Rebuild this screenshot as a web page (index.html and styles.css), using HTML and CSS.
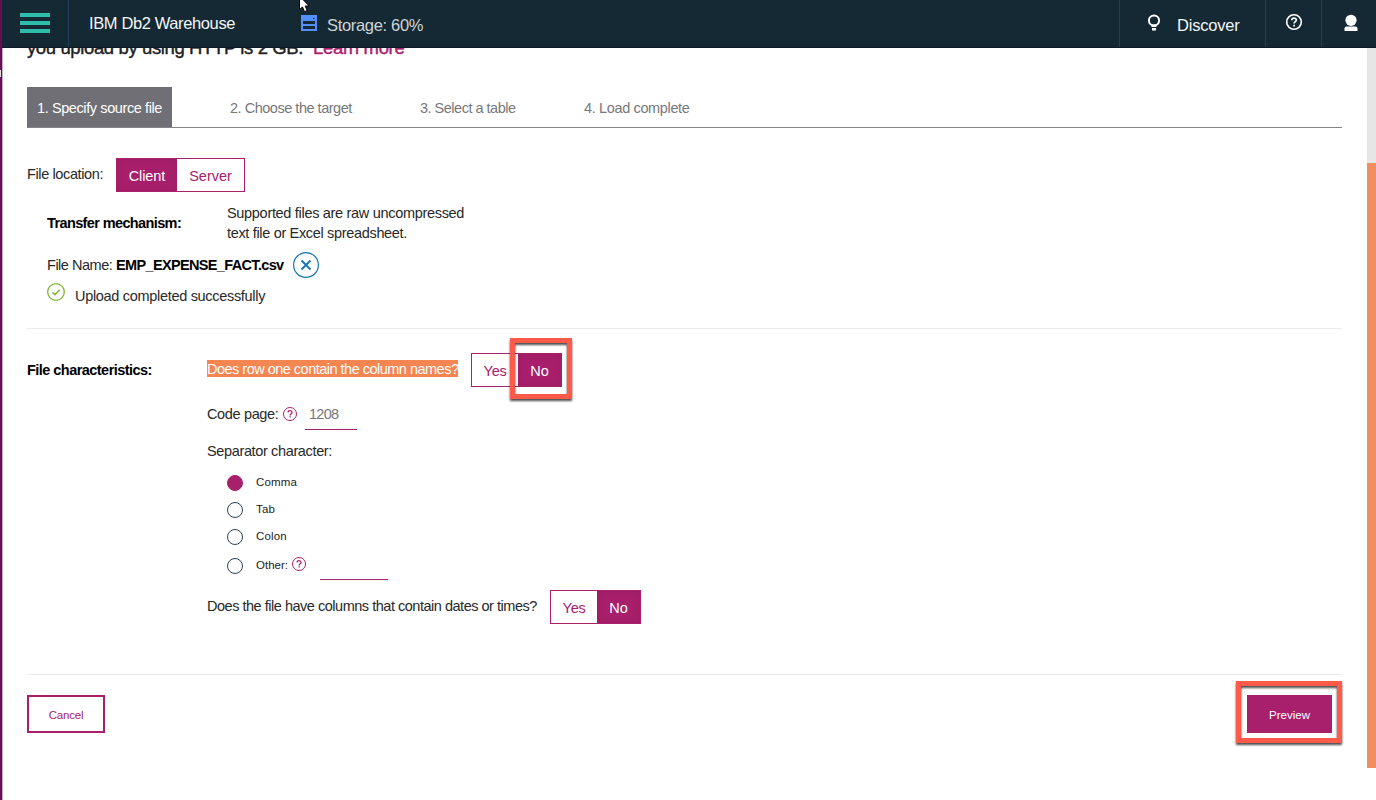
FILE: index.html
```html
<!DOCTYPE html>
<html lang="en">
<head>
<meta charset="utf-8">
<title>IBM Db2 Warehouse</title>
<link rel="stylesheet" href="styles.css">
</head>
<body>
<div class="window">
  <div class="edge"><span class="edge-mark"></span></div>
  <div class="app">
    <header class="topbar">
      <div class="menu"><i></i><i></i><i></i></div>
      <div class="brand"><span>IBM Db2 Warehouse</span></div>
      <div class="storage">
        <svg width="16" height="16" viewBox="0 0 16 16"><path fill="#528ffa" d="M0 0h16v16H0z"/><path fill="#152934" d="M2 6h12v3H2zM2 11h12v3H2zM12 3h1.500v1H12z"/></svg>
        <span>Storage: 60%</span>
      </div>
      <div class="discover">
        <svg width="14" height="18" viewBox="0 0 14 18"><circle cx="7" cy="6.500" r="5.100" fill="none" stroke="#fff" stroke-width="2"/><path fill="#fff" d="M4.500 10.500h5V13h-5zM5 14h4v2.500H5z"/></svg>
        <span>Discover</span>
      </div>
      <div class="help"><svg width="18" height="18" viewBox="0 0 18 18" fill="none" stroke="#fff"><circle cx="9" cy="9" r="7.300" stroke-width="1.600"/><path stroke-width="1.700" d="M6.800 7.200C6.800 4.400 11.300 4.400 11.300 7.100C11.300 8.700 9.100 8.700 9.100 10.500M9.100 11.700v1.700"/></svg></div>
      <div class="user"><svg width="14" height="18" viewBox="0 0 14 18" fill="#fff"><circle cx="7" cy="6.300" r="5.600"/><path d="M.5 17v-2.500q0-1.900 2-1.900h9q2 0 2 1.900V17z"/></svg></div>
    </header>
    <div class="body">
      <main class="content">
        <div class="notice"><p><span>you upload by using HTTP is 2 GB.</span><a>Learn more</a></p></div>
        <nav class="tabs">
          <div class="tab active"><span class="t1">1. Specify source file</span></div>
          <div class="tab tab2"><span class="t2">2. Choose the target</span></div>
          <div class="tab tab3"><span class="t3">3. Select a table</span></div>
          <div class="tab"><span class="t4">4. Load complete</span></div>
        </nav>
        <div class="location">
          <span class="loc-label">File location:</span>
          <div class="toggle"><b class="on client">Client</b><b class="server">Server</b></div>
        </div>
        <section class="upload">
          <div class="transfer"><strong>Transfer mechanism:</strong><p><span class="d1">Supported files are raw uncompressed</span><br><span class="d2">text file or Excel spreadsheet.</span></p></div>
          <div class="filename"><span class="fn">File Name:</span><strong>EMP_EXPENSE_FACT.csv</strong>
            <svg width="26" height="26" viewBox="0 0 26 26" fill="none" stroke="#1678b3"><circle cx="13" cy="13" r="12.400" stroke-width="1.200"/><path stroke-width="1.900" d="M8.500 8.500l9 9M17.500 8.500l-9 9"/></svg></div>
          <div class="status"><svg width="18" height="18" viewBox="0 0 18 18" fill="none" stroke="#83b533" stroke-width="1.300"><circle cx="9" cy="9" r="8.300"/><path stroke-width="1.500" d="M5.300 9.200l2.700 2.400 4.700-4.800"/></svg><span>Upload completed successfully</span></div>
        </section>
        <section class="features">
          <strong class="section-title">File characteristics:</strong>
          <div class="fields">
            <div class="row-question"><mark>Does row one contain the column names?</mark>
              <div class="toggle"><b class="yes">Yes</b><b class="on no">No<span class="callout callout-no"></span></b></div></div>
            <div class="codepage"><span class="cp">Code page:</span>
              <svg class="tip" width="14" height="14" viewBox="0 0 14 14" fill="none" stroke="#aa206c"><circle cx="7" cy="7" r="6.500"/><path stroke-width="1.300" d="M5.100 5.500c0-2.400 3.900-2.400 3.900 0C9 6.900 7.100 6.800 7.100 8.400M7.100 9.200v1.400"/></svg>
              <div class="code-input">1208</div></div>
            <div class="separator">Separator character:</div>
            <div class="radios">
              <div class="radio"><i class="checked"></i><span>Comma</span></div>
              <div class="radio"><i></i><span>Tab</span></div>
              <div class="radio"><i></i><span>Colon</span></div>
              <div class="radio other"><i></i><span>Other:</span>
                <svg class="tip" width="14" height="14" viewBox="0 0 14 14" fill="none" stroke="#aa206c"><circle cx="7" cy="7" r="6.500"/><path stroke-width="1.300" d="M5.100 5.500c0-2.400 3.900-2.400 3.900 0C9 6.900 7.100 6.800 7.100 8.400M7.100 9.200v1.400"/></svg>
                <div class="other-input"></div></div>
            </div>
            <div class="dates"><span>Does the file have columns that contain dates or times?</span>
              <div class="toggle"><b class="yes">Yes</b><b class="on no">No</b></div></div>
          </div>
        </section>
        <footer class="actions">
          <div class="button cancel"><span>Cancel</span></div>
          <div class="button preview"><span>Preview</span><i class="callout callout-preview"></i></div>
        </footer>
      </main>
      <div class="scrollbar"><div class="thumb"></div></div>
    </div>
  </div>
  <svg class="cursor" width="13" height="14" viewBox="0 0 13 14"><path fill="#fff" stroke="#000" d="M.5-4V9.500L3.500 7l2 4.700 2.700-1.200-2-4.500h4z"/></svg>
</div>
</body>
</html>
```
FILE: styles.css
```css
* { box-sizing: border-box; }
body { margin: 0; background: #fff; color: #282828; font: 14.500px/20px "Liberation Sans", Arial, sans-serif; }
p { margin: 0; }
svg { display: block; flex: none; }
span, b, strong, mark, a { white-space: nowrap; }
.window { position: relative; display: flex; width: 1376px; height: 800px; overflow: hidden; }
.edge { width: 3px; background: linear-gradient(90deg, #650f59 0 2px, #c9adc5 2px); padding-top: 70px; }
.edge-mark { display: block; width: 1px; height: 7px; background: #ddd; }
.app { flex: 1; min-width: 0; }

.topbar { display: flex; height: 48px; margin-left: -1px; background: #152934; color: #f4f6f7; font-size: 16.500px; border-bottom: 1px solid #0c1b24; }
.topbar > div { display: flex; }
.menu { width: 67px; border-right: 1px solid #234156; flex-direction: column; gap: 4px; padding: 13px 0 0 18px; }
.menu i { width: 30px; height: 4px; background: #2fbdab; }
.brand { width: 231px; padding: 13px 0 0 20px; letter-spacing: -.38px; }
.storage { flex: 1; padding: 15px 0 0 1px; gap: 10px; }
.storage span { color: #cfd4d7; letter-spacing: -.32px; }
.discover { width: 146px; padding: 14px 0 0 27px; border-left: 1px solid #234156; gap: 16px; }
.discover span { padding-top: 1px; letter-spacing: -.2px; }
.help { width: 56px; border-left: 1px solid #234156; padding: 13px 0 0 19px; }
.user { width: 55px; border-left: 1px solid #234156; padding: 14px 0 0 22px; }

.body { display: flex; height: 752px; }
.content { flex: 1; padding: 0 25px 0 24px; }
.notice { height: 39px; overflow: hidden; color: #222; font-size: 18.500px; }
.notice p { display: flex; margin-top: -10px; gap: 10px; -webkit-text-stroke: .4px; }
.notice span { letter-spacing: -.38px; }
.notice a { color: #aa206c; letter-spacing: -.33px; }
.tabs { display: flex; height: 41px; border-bottom: 1px solid #85848a; color: #77787b; }
.tab { padding-top: 11px; }
.active { width: 145px; padding-left: 10px; margin-right: 58px; background: #706f76; color: #fff; }
.tab2 { width: 190px; }
.tab3 { width: 164px; }
.t1 { letter-spacing: -.4px; }
.t2 { letter-spacing: -.48px; }
.t3 { letter-spacing: -.5px; }
.t4 { letter-spacing: -.36px; }
.location { display: flex; height: 34px; margin-top: 30px; }
.loc-label { width: 89px; padding-top: 6px; letter-spacing: -.38px; }
.toggle { display: flex; height: 34px; border: 1px solid #aa206c; }
.toggle b { position: relative; display: flex; align-items: center; justify-content: center; padding-top: 2px; color: #aa206c; font-weight: 400; }
.toggle .on { background: #a81f6c; color: #fff; box-shadow: inset 0 0 8px #9b1c62; }
.client { width: 60px; letter-spacing: -.1px; }
.server { width: 67px; }
.yes { width: 46px; letter-spacing: -.3px; }
.no { width: 43px; }

.upload { height: 137px; padding: 11px 0 0 20px; border-bottom: 1px solid #ececec; }
strong { color: #000; }
.transfer { display: flex; height: 40px; }
.transfer strong { width: 180px; padding-top: 10px; letter-spacing: -.62px; }
.d1 { letter-spacing: -.31px; }
.d2 { letter-spacing: -.33px; }
.filename { display: flex; height: 26px; margin-top: 9px; line-height: 26px; }
.fn { width: 69px; letter-spacing: -.48px; }
.filename strong { width: 177px; letter-spacing: -.65px; }
.status { display: flex; gap: 10px; margin-top: 5px; }
.status span { padding-top: 3px; letter-spacing: -.31px; }

.features { display: flex; height: 346px; padding-top: 24px; border-bottom: 1px solid #ececec; }
.section-title { width: 180px; padding-top: 7px; letter-spacing: -.54px; }
.row-question { display: flex; }
mark { width: 251px; height: 17px; margin: 7px 13px 0 0; line-height: 18px; background: #f58551; color: #fff; letter-spacing: -.51px; }
.codepage { display: flex; height: 26px; margin-top: 17px; }
.cp { width: 76px; letter-spacing: -.35px; }
.tip { margin-top: 3px; }
.code-input { width: 52px; margin-left: 8px; padding-left: 4px; border-bottom: 1px solid #aa206c; color: #777; letter-spacing: -.7px; }
.separator { margin-top: 11px; letter-spacing: -.36px; }
.radios { padding: 14px 0 0 20px; }
.radio { display: flex; height: 27px; font-size: 11.500px; line-height: 14px; color: #222; }
.radio i { width: 16px; height: 16px; margin-right: 13px; border: 1px solid #2b4254; border-radius: 50%; }
.radio .checked { background: #a81f6c; border-color: #a81f6c; }
.radio span { letter-spacing: .15px; }
.other { height: 24px; margin-top: 2px; }
.other span { width: 36px; letter-spacing: 0; }
.other .tip { margin-top: -1px; }
.other-input { width: 68px; height: 22px; margin-left: 14px; border-bottom: 1px solid #aa206c; }
.dates { display: flex; margin-top: 8px; }
.dates span { width: 343px; padding-top: 6px; letter-spacing: -.48px; }
.dates .toggle { flex: none; }

.actions { display: flex; justify-content: space-between; padding: 20px 10px 0 0; font-size: 11.500px; }
.button { position: relative; display: flex; height: 38px; align-items: center; justify-content: center; padding-top: 2px; }
.cancel { width: 78px; border: 2px solid #a81f6c; color: #aa206c; letter-spacing: -.2px; }
.preview { width: 85px; background: #a81f6c; color: #fff; }
.callout { position: absolute; border: 5px solid #ff5a4a; filter: drop-shadow(0 2px 1px rgba(0,0,0,.7)); }
.callout-no { left: -8px; top: -16px; width: 62px; height: 61px; }
.callout-preview { left: -11px; top: -14px; width: 106px; height: 62px; }
.scrollbar { width: 9px; height: 720px; padding-top: 115px; background: #e6e6e6; }
.thumb { height: 605px; background: #f18d60; }
.cursor { position: absolute; left: 299px; top: 0; }
```
